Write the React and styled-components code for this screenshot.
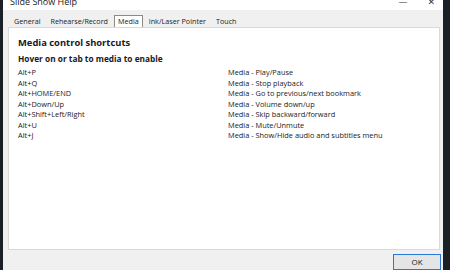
import React from 'react';
import styled, { createGlobalStyle } from 'styled-components';

const shortcuts = [
  ['Alt+P', 'Media - Play/Pause'],
  ['Alt+Q', 'Media - Stop playback'],
  ['Alt+HOME/END', 'Media - Go to previous/next bookmark'],
  ['Alt+Down/Up', 'Media - Volume down/up'],
  ['Alt+Shift+Left/Right', 'Media - Skip backward/forward'],
  ['Alt+U', 'Media - Mute/Unmute'],
  ['Alt+J', 'Media - Show/Hide audio and subtitles menu'],
];

const tabs = ['General', 'Rehearse/Record', 'Media', 'Ink/Laser Pointer', 'Touch'];

const App = () => {
  return (
    <>
      <GlobalStyle />
      <Frame>
        <Dialog>
          <TitleBar>
            <Title>Slide Show Help</Title>
            <Controls>
              <Control>—</Control>
              <Control>✕</Control>
            </Controls>
          </TitleBar>
          <TabStrip>
            {tabs.map((t) => (
              <Tab key={t} active={t === 'Media'}>{t}</Tab>
            ))}
          </TabStrip>
          <Panel>
            <Heading>Media control shortcuts</Heading>
            <SubHeading>Hover on or tab to media to enable</SubHeading>
            <Table>
              {shortcuts.map(([key, action]) => (
                <React.Fragment key={key}>
                  <Cell>{key}</Cell>
                  <Cell>{action}</Cell>
                </React.Fragment>
              ))}
            </Table>
          </Panel>
          <Footer>
            <OkButton>OK</OkButton>
          </Footer>
        </Dialog>
      </Frame>
    </>
  );
};

export default App;

const GlobalStyle = createGlobalStyle`
  body {
    margin: 0;
    background: #1b1f26;
    overflow: hidden;
  }
`;

const Frame = styled.div`
  width: 450px;
  height: 270px;
  box-sizing: border-box;
  padding: 0 7px 0 3px;
  background: #1b1f26;
  display: flex;
`;

const Dialog = styled.div`
  flex: 1;
  display: flex;
  flex-direction: column;
  background: #f0f0f0;
  font-family: "Open Sans", "Noto Sans", sans-serif;
  color: #1a1a1a;
`;

const TitleBar = styled.div`
  height: 10px;
  background: #ffffff;
  display: flex;
  justify-content: space-between;
  overflow: hidden;
  padding: 0 8px 0 7px;
`;

const Title = styled.span`
  font-size: 9px;
  line-height: 9px;
  margin-top: -3px;
  color: #222;
`;

const Controls = styled.div`
  display: flex;
  gap: 20px;
  margin-top: -4px;
`;

const Control = styled.span`
  font-size: 9px;
  line-height: 12px;
  color: #333;
  font-family: "DejaVu Sans", sans-serif;
`;

const TabStrip = styled.div`
  height: 18px;
  display: flex;
  align-items: flex-end;
  padding-left: 7px;
`;

const Tab = styled.div`
  height: 12px;
  padding: 0 3px;
  margin-right: 2px;
  box-sizing: border-box;
  font-size: 7.2px;
  line-height: 11px;
  color: #222;
  border: 1px solid ${(p) => (p.active ? '#8a8a8a' : 'transparent')};
  border-bottom: none;
  background: ${(p) => (p.active ? '#ffffff' : 'transparent')};
`;

const Panel = styled.div`
  height: 230px;
  box-sizing: border-box;
  margin: 0 3px 0 5px;
  background: #ffffff;
  border: 1px solid #d9d9d9;
  padding: 8px 9px;
`;

const Heading = styled.div`
  font-size: 9.4px;
  font-weight: 700;
  line-height: 14px;
`;

const SubHeading = styled.div`
  font-size: 8.3px;
  font-weight: 700;
  line-height: 12px;
  margin-top: 3px;
`;

const Table = styled.div`
  display: grid;
  grid-template-columns: 210px 1fr;
  margin-top: 2px;
`;

const Cell = styled.div`
  font-size: 7.4px;
  line-height: 10.5px;
  white-space: nowrap;
`;

const Footer = styled.div`
  flex: 1;
  display: flex;
  justify-content: flex-end;
  align-items: flex-start;
  padding: 4px 2px 0 0;
`;

const OkButton = styled.div`
  width: 48px;
  height: 16px;
  box-sizing: border-box;
  border: 1.5px solid #2a78d6;
  background: #e5e5e5;
  font-size: 8px;
  text-align: center;
  line-height: 13px;
`;
